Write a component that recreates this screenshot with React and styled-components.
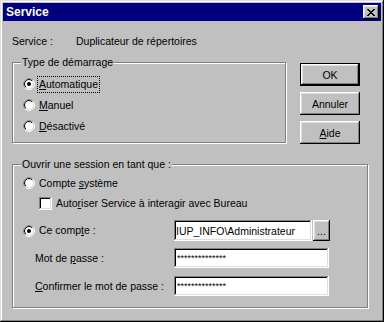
import React, { useId } from 'react';
import styled, { createGlobalStyle } from 'styled-components';

const GlobalStyle = createGlobalStyle`
  html, body {
    margin: 0;
    padding: 0;
    background: #c0c0c0;
  }
  body {
    font-family: "Liberation Sans", Arial, sans-serif;
    font-size: 10.5px;
    color: #000;
  }
`;

const raised = `
  box-shadow: inset -1px -1px #000, inset 1px 1px #fff,
    inset -2px -2px #808080, inset 2px 2px #dfdfdf;
`;

const sunken = `
  box-shadow: inset -1px -1px #fff, inset 1px 1px #808080,
    inset -2px -2px #dfdfdf, inset 2px 2px #000;
`;

const Window = styled.div`
  width: 384px;
  height: 322px;
  box-sizing: border-box;
  padding: 3px;
  background: #c0c0c0;
  box-shadow: inset -1px -1px #000, inset 1px 1px #dfdfdf,
    inset -2px -2px #808080, inset 2px 2px #fff;
  display: flex;
  flex-direction: column;
`;

const TitleBar = styled.div`
  height: 18px;
  flex: 0 0 18px;
  background: #000080;
  color: #fff;
  font-weight: bold;
  font-size: 12px;
  display: flex;
  align-items: center;
  justify-content: space-between;
  padding: 0 2px 0 3px;
`;

const CloseButton = styled.div`
  width: 16px;
  height: 14px;
  background: #c0c0c0;
  ${raised}
  display: flex;
  align-items: center;
  justify-content: center;
  padding-right: 1px;
  box-sizing: border-box;
`;

const Body = styled.div`
  padding: 14px 0 0 9px;
  display: flex;
  flex-direction: column;
`;

const ServiceRow = styled.div`
  display: flex;
  line-height: 13px;
  padding-left: 0;
`;

const ServiceLabel = styled.span`
  width: 64px;
`;

const MainRow = styled.div`
  display: flex;
  align-items: flex-start;
  margin-top: 8px;
`;

const GroupBox = styled.fieldset`
  width: ${p => p.$w}px;
  height: ${p => p.$h}px;
  min-width: 0;
  box-sizing: border-box;
  margin: ${p => p.$mt || 0}px 0 0 0;
  padding: ${p => p.$pt}px 0 0 10px;
  border: 1px solid #808080;
  box-shadow: 1px 1px 0 #fff, inset 1px 1px 0 #fff;
  display: flex;
  flex-direction: column;
`;

const Legend = styled.legend`
  line-height: 13px;
  padding: 0 1px;
  margin-left: -2px;
  background: #c0c0c0;
`;

const ButtonColumn = styled.div`
  display: flex;
  flex-direction: column;
  gap: 6px;
  margin: 7px 0 0 14px;
`;

const Button = styled.div`
  width: 60px;
  height: 23px;
  box-sizing: border-box;
  background: #c0c0c0;
  display: flex;
  align-items: center;
  justify-content: center;
  ${raised}
  ${p => p.$default && `
    border: 1px solid #000;
  `}
`;

const OptionRow = styled.div`
  height: ${p => p.$h || 20}px;
  display: flex;
  align-items: center;
  gap: ${p => p.$gap || 3}px;
  padding-left: ${p => p.$indent || 0}px;
  margin-top: ${p => p.$mt || 0}px;
`;

const OptionLabel = styled.span`
  line-height: 13px;
  padding: 1px;
  outline: ${p => (p.$focus ? '1px dotted #000' : 'none')};
`;

const CheckBox = styled.div`
  width: 13px;
  height: 13px;
  background: #fff;
  ${sunken}
`;

const FieldRow = styled.div`
  display: flex;
  align-items: center;
  height: ${p => p.$h}px;
  margin-top: ${p => p.$mt}px;
`;

const FieldLabel = styled.div`
  width: 151px;
  box-sizing: border-box;
  padding-left: ${p => p.$indent || 0}px;
  display: flex;
  align-items: center;
  gap: 3px;
  line-height: 13px;
`;

const TextField = styled.input`
  width: ${p => p.$w}px;
  height: ${p => p.$h}px;
  box-sizing: border-box;
  border: none;
  margin: 0;
  padding: 0 0 0 ${p => p.$pl || 3}px;
  background: #fff;
  font: inherit;
  font-size: ${p => p.$fs || 10.5}px;
  color: #000;
  outline: none;
  ${sunken}
`;

const BrowseButton = styled.div`
  width: 17px;
  height: 21px;
  margin-left: 1px;
  box-sizing: border-box;
  background: #c0c0c0;
  display: flex;
  align-items: flex-end;
  justify-content: center;
  padding-bottom: 6px;
  line-height: 8px;
  ${raised}
`;

function Radio({ checked }) {
  const id = useId().replace(/:/g, '');
  return (
    <svg width="12" height="12" viewBox="0 0 12 12">
      <defs>
        <clipPath id={`tl${id}`}>
          <polygon points="0,0 12,0 0,12" />
        </clipPath>
      </defs>
      <circle cx="6" cy="6" r="5.5" fill="none" stroke="#fff" />
      <circle cx="6" cy="6" r="5.5" fill="none" stroke="#808080" clipPath={`url(#tl${id})`} />
      <circle cx="6" cy="6" r="4.5" fill="#fff" stroke="#dfdfdf" />
      <circle cx="6" cy="6" r="4.5" fill="none" stroke="#000" clipPath={`url(#tl${id})`} />
      {checked && <circle cx="6" cy="6" r="2" fill="#000" />}
    </svg>
  );
}

function CloseGlyph() {
  const rects = [];
  for (let r = 0; r < 7; r++) {
    rects.push(<rect key={`a${r}`} x={r} y={r} width="2" height="1" />);
    rects.push(<rect key={`b${r}`} x={6 - r} y={r} width="2" height="1" />);
  }
  return (
    <svg width="8" height="7" viewBox="0 0 8 7" shapeRendering="crispEdges" fill="#000">
      {rects}
    </svg>
  );
}

export default function App() {
  return (
    <>
      <GlobalStyle />
      <Window>
        <TitleBar>
          <span>Service</span>
          <CloseButton>
            <CloseGlyph />
          </CloseButton>
        </TitleBar>
        <Body>
          <ServiceRow>
            <ServiceLabel>Service :</ServiceLabel>
            <span>Duplicateur de répertoires</span>
          </ServiceRow>

          <MainRow>
            <GroupBox $w={274} $h={87} $pt={5}>
              <Legend>Type de démarrage</Legend>
              <OptionRow>
                <Radio checked />
                <OptionLabel $focus>
                  <u>A</u>utomatique
                </OptionLabel>
              </OptionRow>
              <OptionRow $mt={1}>
                <Radio />
                <OptionLabel>
                  <u>M</u>anuel
                </OptionLabel>
              </OptionRow>
              <OptionRow $mt={1}>
                <Radio />
                <OptionLabel>
                  <u>D</u>ésactivé
                </OptionLabel>
              </OptionRow>
            </GroupBox>
            <ButtonColumn>
              <Button $default>OK</Button>
              <Button>Annuler</Button>
              <Button>
                <span>
                  <u>A</u>ide
                </span>
              </Button>
            </ButtonColumn>
          </MainRow>

          <GroupBox $w={356} $h={150} $pt={2} $mt={14}>
            <Legend>Ouvrir une session en tant que :</Legend>
            <OptionRow>
              <Radio />
              <OptionLabel>
                Compte <u>s</u>ystème
              </OptionLabel>
            </OptionRow>
            <OptionRow $indent={16} $gap={3}>
              <CheckBox />
              <OptionLabel>
                Auto<u>r</u>iser Service à interagir avec Bureau
              </OptionLabel>
            </OptionRow>
            <FieldRow $h={21} $mt={7}>
              <FieldLabel>
                <Radio checked />
                <OptionLabel>
                  Ce comp<u>t</u>e :
                </OptionLabel>
              </FieldLabel>
              <TextField $w={138} $h={21} $pl={2} readOnly value="IUP_INFO\Administrateur" />
              <BrowseButton>...</BrowseButton>
            </FieldRow>
            <FieldRow $h={20} $mt={7}>
              <FieldLabel $indent={12}>
                <span>
                  Mot de <u>p</u>asse :
                </span>
              </FieldLabel>
              <TextField $w={155} $h={20} $fs={9} readOnly value="**************" />
            </FieldRow>
            <FieldRow $h={20} $mt={8}>
              <FieldLabel $indent={12}>
                <span>
                  <u>C</u>onfirmer le mot de passe :
                </span>
              </FieldLabel>
              <TextField $w={155} $h={20} $fs={9} readOnly value="**************" />
            </FieldRow>
          </GroupBox>
        </Body>
      </Window>
    </>
  );
}
